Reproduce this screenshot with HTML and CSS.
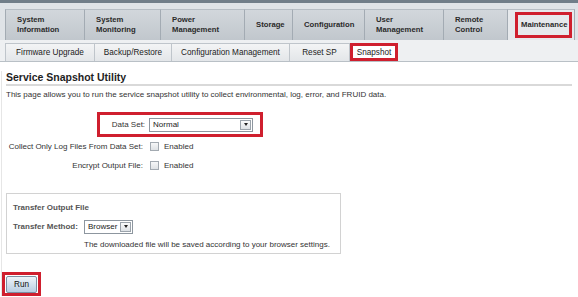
FILE: index.html
```html
<!DOCTYPE html>
<html>
<head>
<meta charset="utf-8">
<link rel="stylesheet" href="styles.css">
</head>
<body>
<div class="topbar"></div>
<div class="tabstrip">
  <div class="tabs">
    <div class="tab">System<br>Information</div>
    <div class="tab">System<br>Monitoring</div>
    <div class="tab">Power<br>Management</div>
    <div class="tab">Storage</div>
    <div class="tab">Configuration</div>
    <div class="tab">User<br>Management</div>
    <div class="tab">Remote<br>Control</div>
    <div class="tab tab-active"><span class="mark mark-tab">Maintenance</span></div>
  </div>
</div>
<div class="subbar">
  <div class="subtabs">
    <div class="subtab">Firmware Upgrade</div>
    <div class="subtab">Backup/Restore</div>
    <div class="subtab">Configuration Management</div>
    <div class="subtab">Reset SP</div>
    <div class="subtab subtab-active">Snapshot</div>
  </div>
</div>
<div class="main">
  <h1 class="title">Service Snapshot Utility</h1>
  <p class="desc">This page allows you to run the service snapshot utility to collect environmental, log, error, and FRUID data.</p>
  <div class="form">
    <div class="ds-box">
      <span class="ds-label">Data Set:</span>
      <span class="select select-ds"><span class="sel-text">Normal</span><span class="sel-btn"><span class="tri"></span></span></span>
    </div>
    <div class="row">
      <span class="label">Collect Only Log Files From Data Set:</span>
      <span class="check"></span><span class="check-text">Enabled</span>
    </div>
    <div class="row">
      <span class="label">Encrypt Output File:</span>
      <span class="check"></span><span class="check-text">Enabled</span>
    </div>
  </div>
  <div class="transfer">
    <div class="tr-title">Transfer Output File</div>
    <div class="tr-row">
      <span class="tr-label">Transfer Method:</span>
      <span class="select select-br"><span class="sel-text">Browser</span><span class="sel-btn"><span class="tri"></span></span></span>
    </div>
    <div class="tr-note">The downloaded file will be saved according to your browser settings.</div>
  </div>
  <div class="run-box"><button class="run">Run</button></div>
</div>
</body>
</html>
```
FILE: styles.css
```css
* { box-sizing: border-box; }
html, body { margin: 0; padding: 0; background: #fff; }
body { font-family: "Liberation Sans", Arial, sans-serif; color: #222; width: 578px; height: 297px; overflow: hidden; }

.topbar { height: 3px; background: #717e89; }
.tabstrip { background: #dfe3e7; padding: 6px 0 0 5px; }
.tabs {
  display: grid;
  grid-template-columns: 80px 76px 84px 48px 72px 79px 64px 67px;
  height: 31px;
}
.tab {
  background: linear-gradient(#d2d7dc, #c1c7cd);
  border-right: 1px solid #a3abb3;
  border-top: 1px solid #b6bdc4;
  font-weight: bold;
  font-size: 7.7px;
  line-height: 10px;
  color: #2a2a2a;
  padding: 0 0 0 11px;
  display: flex;
  align-items: center;
}
.tab:first-child { border-left: 1px solid #a3abb3; }
.tab-active { background: #e6e9ec; padding-left: 7px; }
.mark { border: 3px solid #cf1f2e; }
.mark-tab { padding: 5px 1px 5px 3px; }

.subbar {
  background: #eef0f2;
  padding: 3px 0 0 5px;
  border-bottom: 1px solid #b9c0c6;
}
.subtabs {
  display: grid;
  grid-template-columns: 90px 77px 118px 60px 51px;
  height: 18px;
}
.subtab {
  background: linear-gradient(#f3f4f5, #e3e6e9);
  border: 1px solid #bfc5cb;
  border-left: none;
  border-bottom: none;
  font-size: 8.2px;
  color: #222;
  display: flex;
  align-items: center;
  justify-content: center;
}
.subtab:first-child { border-left: 1px solid #bfc5cb; }
.subtab-active { background: #fff; border: 3px solid #cf1f2e; margin-right: 3px; }

.main { padding: 0 0 0 4px; border-left: 1px solid #e6e6e6; margin-left: 1px; }
.title {
  margin: 9px 6px 0 0;
  font-size: 10.5px;
  line-height: 13px;
  font-weight: bold;
  color: #1e1e1e;
  border-bottom: 2px solid #d9d9d9;
}
.desc { margin: 3px 0 0; font-size: 8px; line-height: 11px; color: #333; }

.form { margin-top: 12px; font-size: 8px; color: #333; }
.ds-box {
  display: flex;
  align-items: center;
  margin-left: 91px;
  width: 166px;
  height: 25px;
  border: 3px solid #cf1f2e;
  padding: 0 7px 0 0;
}
.ds-label { width: 46px; text-align: right; }
.select {
  display: flex;
  align-items: stretch;
  border: 1px solid #8d969f;
  background: #fff;
  color: #222;
}
.select-ds { margin-left: 4px; width: 106px; height: 14px; }
.sel-text { flex: 1; padding-left: 3px; display: flex; align-items: center; }
.sel-btn {
  width: 11px;
  margin: 1px;
  border: 1px solid #9ba3ab;
  background: linear-gradient(#fafbfc, #dde1e5);
  display: flex;
  align-items: center;
  justify-content: center;
}
.tri {
  width: 0; height: 0;
  border-left: 2.5px solid transparent;
  border-right: 2.5px solid transparent;
  border-top: 3px solid #222;
}

.row { display: flex; align-items: center; height: 19px; }
.label { width: 137px; flex-shrink: 0; text-align: right; white-space: nowrap; }
.check {
  width: 9px; height: 9px;
  margin-left: 7px;
  border: 1px solid #a3aab1;
  background: linear-gradient(#f6f7f8, #dfe2e5);
}
.check-text { margin-left: 5px; }

.transfer {
  margin-top: 18px;
  width: 335px;
  border: 1px solid #d2d2d2;
  padding: 8px 0 3px 6px;
  font-size: 8px;
  color: #333;
}
.tr-title { font-weight: bold; color: #555; line-height: 11px; }
.tr-row { display: flex; align-items: center; margin-top: 6px; height: 15px; }
.tr-label { width: 71px; font-weight: bold; color: #555; }
.select-br { width: 49px; height: 14px; }
.tr-note { margin: 5px 0 0 71px; line-height: 11px; }

.run-box {
  margin: 18px 0 0 -4px;
  width: 39px;
  height: 24px;
  border: 3px solid #cf1f2e;
  padding: 0 0 0 1px;
  display: flex;
  align-items: center;
}
.run {
  width: 31px;
  height: 17px;
  padding: 0;
  font-family: "Liberation Sans", Arial, sans-serif;
  font-size: 8.2px;
  color: #111;
  border: 1px solid #7b8fa3;
  border-radius: 2px;
  background: linear-gradient(#eef4fa, #b9cee2);
}
```
